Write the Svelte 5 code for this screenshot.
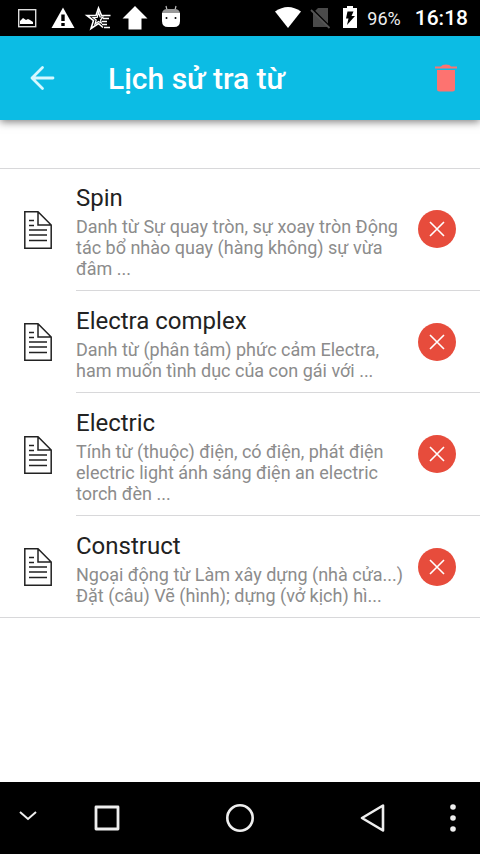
<script lang="ts">
    interface HistoryEntry {
        id: number;
        word: string;
        meaning: string;
    }

    let entries = $state<HistoryEntry[]>([
        { id: 1, word: 'Spin', meaning: 'Danh từ Sự quay tròn, sự xoay tròn Động tác bổ nhào quay (hàng không) sự vừa đâm ...' },
        { id: 2, word: 'Electra complex', meaning: 'Danh từ (phân tâm) phức cảm Electra, ham muốn tình dục của con gái với ...' },
        { id: 3, word: 'Electric', meaning: 'Tính từ (thuộc) điện, có điện, phát điện electric light ánh sáng điện an electric torch đèn ...' },
        { id: 4, word: 'Construct', meaning: 'Ngoại động từ Làm xây dựng (nhà cửa...) Đặt (câu) Vẽ (hình); dựng (vở kịch) hì...' },
    ]);

    function remove(id: number) {
        entries = entries.filter((entry) => entry.id !== id);
    }

    function clearAll() {
        entries = [];
    }
</script>

<div class="screen">
    <div class="status-bar">
        <div class="notifications">
            <svg viewBox="0 0 24 24" width="24" height="24">
                <rect x="3.7" y="3.7" width="17" height="17" fill="none" stroke="#ddd" stroke-width="1.4"/>
                <path d="M5 18v-3l3-3 3 2 2-1 2 1 3 2v2z" fill="#fff"/>
            </svg>
            <svg viewBox="0 0 24 24" width="24" height="24">
                <path d="M12 1.500 23.500 22H.5z" fill="#fff"/>
                <path d="M10.300 8.500h3.400v6.500h-3.400zM10.300 17h3.400v3h-3.400z" fill="#000"/>
            </svg>
            <svg viewBox="0 0 24 24" width="24" height="24" fill="none" stroke="#fff">
                <path d="M23.500 9.500H14.500L11.500 2 9 9.500H0l6.500 5L4 22.500l7.500-5 4.500 4" stroke-width="1.600"/>
                <path d="M11.500 6l1.500 5h3l-2.500 3 .8 3-2.800-1.500-3.500 2.500 1.200-4-3-2.500h4z" stroke-width="1.200"/>
                <path d="M16 12.500h6M15 15.500h5M15 18.500h5M17 21.500h6" stroke-width="1.400"/>
            </svg>
            <svg viewBox="0 0 24 24" width="24" height="24">
                <path d="M12 0 24.500 12.500H18.500V23.500H5.500V12.500H-.5z" fill="#fff"/>
            </svg>
            <svg viewBox="0 0 24 24" width="24" height="24">
                <path d="M7 0 8 4M17 0 16 4" stroke="#bbb" stroke-width="1.200"/>
                <path d="M3 7Q4 3 8 3h8q4 0 5 4z" fill="#999"/>
                <path d="M3 7h18v8q0 6-6 6H9q-6 0-6-6z" fill="#fff"/>
                <circle cx="7.500" cy="12" r="1"/>
                <circle cx="16.500" cy="12" r="1"/>
            </svg>
        </div>
        <div class="system">
            <svg viewBox="0 0 26 24" width="26" height="24">
                <path d="M0 5.500Q13-3.500 26 5.500L13 22z" fill="#fff"/>
            </svg>
            <svg viewBox="0 0 22 24" width="22" height="24">
                <path d="M7 2h10v19H2V7z" fill="#4a4a4a"/>
                <path d="M0 2 19 21" stroke="#000" stroke-width="2"/>
                <path d="M0 4 18.500 22" stroke="#555" stroke-width="1.800"/>
            </svg>
            <svg viewBox="0 0 14 24" width="14" height="24">
                <path d="M4 0h6v2h4v20H0V2h4z" fill="#fff"/>
                <path d="M4.500 5.500h6L8.500 10H12L4 19l1.500-6.500H3z" fill="#000"/>
            </svg>
            <span class="battery">96%</span>
            <span class="clock">16:18</span>
        </div>
    </div>

    <header class="toolbar">
        <button class="icon-button" aria-label="Quay lại">
            <svg viewBox="0 0 28 28" width="28" height="28" fill="none" stroke="#d5f8ff" stroke-width="2.800" stroke-linecap="round" stroke-linejoin="round">
                <path d="M25 14H4M14.500 3.500 4 14l10.500 10.500"/>
            </svg>
        </button>
        <h1>Lịch sử tra từ</h1>
        <button class="icon-button" aria-label="Xóa tất cả" onclick={clearAll}>
            <svg viewBox="0 0 28 28" width="28" height="28" fill="#fd7370">
                <path d="M3 4.500V2.500h6q1-2 5-2t5 2h6v2zM5 6h18v19q0 2.500-2.500 2.500h-13Q5 27.500 5 25z"/>
            </svg>
        </button>
    </header>

    <main>
        <ul class="history">
            {#each entries as entry (entry.id)}
                <li class="entry">
                    <svg class="entry-icon" viewBox="0 0 28 38" width="28" height="38" fill="none" stroke="#222" stroke-width="1.500">
                        <path d="M.8.800H14L27.200 14v23.200H.8zM14 .8V14h13.200"/>
                        <path d="M5 9.500h5M5 14.500h5M5 19h18M5 24h18M5 29.500h18"/>
                    </svg>
                    <div class="entry-body">
                        <div class="entry-text">
                            <h2>{entry.word}</h2>
                            <p>{entry.meaning}</p>
                        </div>
                        <button class="remove" aria-label="Xóa {entry.word}" onclick={() => remove(entry.id)}>
                            <svg viewBox="0 0 16 16" width="16" height="16" stroke="#fff" stroke-width="1.600">
                                <path d="M1 1l14 14M15 1 1 15"/>
                            </svg>
                        </button>
                    </div>
                </li>
            {/each}
        </ul>
    </main>

    <nav class="nav-bar">
        <button class="nav-hide" aria-label="Ẩn thanh điều hướng">
            <svg viewBox="0 0 20 20" width="20" height="20" fill="none" stroke="#eee" stroke-width="2">
                <path d="M2 4l8 7 8-7"/>
            </svg>
        </button>
        <button class="nav-main" aria-label="Gần đây">
            <svg viewBox="0 0 30 30" width="30" height="30" fill="none" stroke="#eee" stroke-width="2.800" stroke-linejoin="round">
                <rect x="4" y="4" width="22" height="22"/>
            </svg>
        </button>
        <button class="nav-main" aria-label="Màn hình chính">
            <svg viewBox="0 0 30 30" width="30" height="30" fill="none" stroke="#eee" stroke-width="2.600">
                <circle cx="15" cy="15" r="12.700"/>
            </svg>
        </button>
        <button class="nav-main" aria-label="Trở về">
            <svg viewBox="0 0 30 30" width="30" height="30" fill="none" stroke="#eee" stroke-width="2.600" stroke-linejoin="round">
                <path d="M25 2.500v25L4 15z"/>
            </svg>
        </button>
        <button class="nav-more" aria-label="Tùy chọn">
            <svg viewBox="0 0 8 30" width="8" height="30" fill="#eee">
                <circle cx="4" cy="4" r="2.800"/>
                <circle cx="4" cy="15" r="2.800"/>
                <circle cx="4" cy="26" r="2.800"/>
            </svg>
        </button>
    </nav>
</div>

<style>
    :global(body) {
        margin: 0;
        background: #fff;
    }

    .screen {
        display: flex;
        flex-direction: column;
        min-height: 100vh;
        font-family: Roboto, 'Noto Sans', sans-serif;
    }

    svg {
        display: block;
        flex-shrink: 0;
        overflow: visible;
    }

    button {
        display: flex;
        align-items: center;
        justify-content: center;
        padding: 0;
        border: none;
        background: none;
        cursor: pointer;
    }

    .status-bar {
        display: flex;
        align-items: center;
        justify-content: space-between;
        height: 36px;
        padding: 0 12px 0 15px;
        background: #000;
        color: #fff;
    }

    .notifications {
        display: flex;
        gap: 12px;
    }

    .system {
        display: flex;
        align-items: center;
        gap: 10px;
    }

    .battery {
        font-size: 18px;
        color: #eee;
    }

    .clock {
        margin-left: 4px;
        font-size: 21px;
        font-weight: 500;
    }

    .toolbar {
        display: flex;
        align-items: center;
        height: 84px;
        padding: 0 8px 0 16px;
        background: #0cbce4;
        box-shadow: 0 2px 8px rgba(0, 0, 0, 0.5);
    }

    .icon-button {
        width: 52px;
        height: 52px;
    }

    .toolbar h1 {
        flex: 1;
        margin: 0 0 0 40px;
        padding-top: 2px;
        font-size: 30px;
        font-weight: 500;
        line-height: 36px;
        color: #fff;
    }

    main {
        flex: 1;
        padding-top: 48px;
    }

    .history {
        margin: 0;
        padding: 0;
        list-style: none;
        box-shadow: inset 0 1px #d8d8da, inset 0 -1px #d8d8da;
    }

    .entry {
        display: flex;
        align-items: center;
        gap: 24px;
        padding-left: 24px;
    }

    .entry-body {
        display: flex;
        flex: 1;
        align-items: center;
        gap: 12px;
        padding-right: 24px;
        border-bottom: 1px solid #d8d8da;
    }

    .entry-text {
        flex: 1;
        padding: 16px 0 11px;
    }

    .entry-text h2 {
        margin: 0 0 4px;
        font-size: 24px;
        font-weight: 400;
        line-height: 28px;
        color: #222;
    }

    .entry-text p {
        margin: 0;
        font-size: 18px;
        line-height: 21px;
        color: #8c8c8c;
    }

    .remove {
        width: 38px;
        height: 38px;
        flex-shrink: 0;
        border-radius: 50%;
        background: #e74c3c;
    }

    .nav-bar {
        display: flex;
        align-items: center;
        height: 72px;
        background: #000;
    }

    .nav-bar button {
        height: 72px;
    }

    .nav-hide {
        width: 40px;
        padding-left: 16px;
    }

    .nav-main {
        flex: 1;
    }

    .nav-more {
        width: 40px;
        padding-right: 14px;
    }
</style>
